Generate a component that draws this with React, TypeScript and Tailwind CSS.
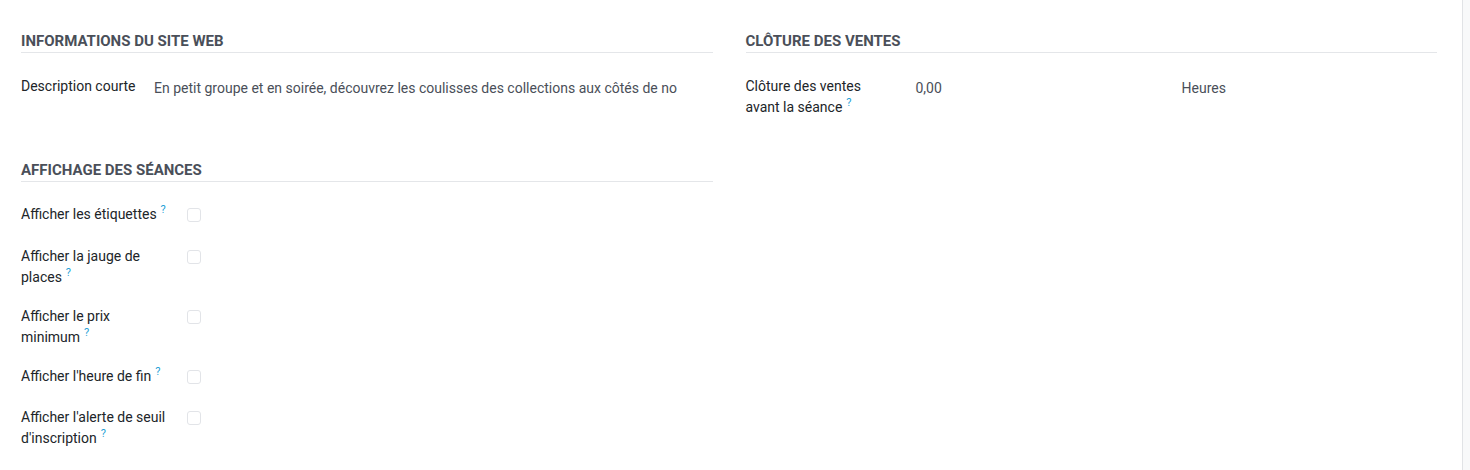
import React from "react";

const Q = () => (
  <span className="relative -top-[6px] ml-[4px] text-[11px] leading-[0] text-[#1f9fd6] font-normal">?</span>
);

function Heading({ children }: { children: React.ReactNode }) {
  return (
    <div className="border-b border-[#e4e6e9] text-[15px] leading-[22px] font-bold uppercase text-[#4a4f59]">
      {children}
    </div>
  );
}

function CheckRow({ label, last }: { label: React.ReactNode; last?: boolean }) {
  return (
    <div className={`flex items-start min-h-[23.5px] ${last ? "" : "mb-[18px]"}`}>
      <div className="w-[166px] pr-[12px] text-[#212529]">{label}</div>
      <div className="pt-[4px]">
        <div className="w-[14px] h-[14px] rounded-[3px] border border-[#e2e4e8] bg-white" />
      </div>
    </div>
  );
}

export default function App() {
  return (
    <div
      className="flex w-[1470px] h-[470px] bg-white text-[14px] leading-[21px]"
      style={{ fontFamily: "Roboto, 'Liberation Sans', sans-serif" }}
    >
      <div className="w-[1463px] border-r border-[#e1e3e6] pl-[21px] pr-[25px] pt-[30px]">
        <div className="grid grid-cols-2 gap-x-[33px]">
          <div>
            <Heading>Informations du site web</Heading>
            <div className="flex mt-[23px]">
              <div className="w-[133px] text-[#212529]">Description courte</div>
              <div className="w-[523px] overflow-hidden whitespace-nowrap pt-[2px] text-[#4a4f59]">
                En petit groupe et en soirée, découvrez les coulisses des collections aux côtés de nos médiateurs
              </div>
            </div>
            <div className="mt-[60px]">
              <Heading>Affichage des séances</Heading>
              <div className="mt-[22px]">
                <CheckRow label={<>Afficher les étiquettes<Q /></>} />
                <CheckRow label={<>Afficher la jauge de places<Q /></>} />
                <CheckRow label={<>Afficher le prix minimum<Q /></>} />
                <CheckRow label={<>Afficher l'heure de fin<Q /></>} />
                <CheckRow label={<>Afficher l'alerte de seuil d'inscription<Q /></>} last />
              </div>
            </div>
          </div>
          <div>
            <Heading>Clôture des ventes</Heading>
            <div className="flex mt-[23px]">
              <div className="w-[170px] pr-[50px] text-[#212529]">
                Clôture des ventes avant la séance<Q />
              </div>
              <div className="w-[266px] pt-[2px] text-[#4a4f59]">0,00</div>
              <div className="pt-[2px] text-[#4a4f59]">Heures</div>
            </div>
          </div>
        </div>
      </div>
      <div className="flex-1 bg-[#f8f9fa]" />
    </div>
  );
}
